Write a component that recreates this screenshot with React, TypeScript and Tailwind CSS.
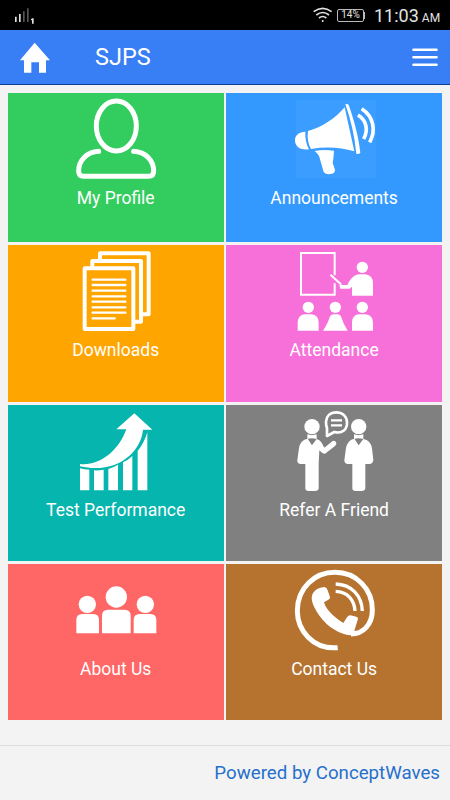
import type { ReactNode } from "react";

type TileProps = {
  label: string;
  color: string;
  viewBox: string;
  children: ReactNode;
};

function Tile({ label, color, viewBox, children }: TileProps) {
  return (
    <button type="button" className={`flex flex-col items-center overflow-hidden text-white ${color}`}>
      <svg viewBox={viewBox} className="h-[94px] w-[216px] shrink-0" fill="white" aria-hidden="true">
        {children}
      </svg>
      <span className="text-[17.5px] leading-[22px] whitespace-nowrap">{label}</span>
    </button>
  );
}

function ProfileIcon() {
  return (
    <g fill="none" stroke="white" strokeWidth="15" strokeLinecap="round" strokeLinejoin="round">
      <ellipse cx="169" cy="108" rx="60" ry="75" />
      <path d="M116 184C80 186 56 211 56 243Q56 259 71 259H266Q281 259 281 243C281 211 257 186 221 184" />
    </g>
  );
}

function MegaphoneIcon() {
  return (
    <>
      <rect x="77" y="28" width="241" height="236" fill="#3a9dff" />
      <path d="M106 125C84 126 74 138 75 153C77 171 91 181 117 178C109 164 105 144 106 125Z" />
      <path d="M114 123C157 111 195 86 224 52L253 184C213 172 168 169 123 177C114 162 111 143 114 123Z" />
      <path d="M226 43Q231 40 236 44C252 90 266 139 271 188Q266 194 259 191C254 139 243 91 226 43Z" />
      <path d="M134 183Q160 178 192 182Q191 204 188 219L195 239Q195 252 180 252Q166 254 161 246L150 208Q148 194 134 183Z" />
      <g fill="none" stroke="white" strokeWidth="11">
        <path d="M264 75C289 91 296 119 281 147" />
        <path d="M275 56C312 80 318 122 299 157" />
      </g>
    </>
  );
}

function DocumentsIcon() {
  return (
    <g fill="none" stroke="white" strokeWidth="12" strokeLinejoin="round">
      <rect x="74" y="85" width="146" height="182" />
      <path d="M97 81V63H243V245H224M120 59V40H266V223H246" />
      <path strokeWidth="7" strokeLinecap="round" d="M98 119H196M98 135H196M98 152H196M98 169H196M98 185H196M98 202H196M98 218H196M98 235H164" />
    </g>
  );
}

function ClassroomIcon() {
  return (
    <>
      <path d="M164 106V39H63V164H164V130" fill="none" stroke="white" strokeWidth="6" />
      <path d="M153 106L182 132" fill="none" stroke="white" strokeWidth="6" strokeLinecap="round" />
      <circle cx="247" cy="82" r="17" />
      <path d="M178 135H202C211 117 222 105 236 103H256Q279 106 279 130V167H216V140L209 146H181Z" />
      <circle cx="85" cy="202" r="17" />
      <circle cx="166" cy="202" r="17" />
      <circle cx="247" cy="202" r="17" />
      <path d="M53 272V247Q54 224 76 223H94Q116 225 116 248V272Z" />
      <path d="M216 272V247Q217 224 238 223H256Q279 225 279 248V272Z" />
      <path d="M129 272Q145 248 149 231Q152 223 160 223H172Q181 223 184 232Q189 250 203 272Z" />
    </>
  );
}

function GrowthIcon() {
  return (
    <>
      <path d="M60 192C119 198 175 154 199 88H169L223 40L277 89H249C243 157 169 224 60 199Z" />
      <path d="M60 205Q74 209 88 209V271H60ZM102 211Q116 212 131 209V271H102ZM145 207Q161 202 174 194V271H145ZM189 187Q204 181 217 168V271H189ZM233 153Q253 128 262 97V271H233Z" />
    </>
  );
}

function FriendsIcon() {
  return (
    <>
      <circle cx="111" cy="80" r="23" />
      <circle cx="251" cy="80" r="23" />
      <path d="M97 103Q111 108 125 103V117Q111 113 97 117ZM237 103Q251 108 265 103V117Q251 113 237 117Z" />
      <path d="M98 116L111 136L125 117Q134 119 139 127L148 143L173 123Q181 120 184 129Q185 133 180 138L150 161Q142 162 133 151L131 190V265Q130 273 120 273H101Q91 273 91 265V192H76Q66 190 67 181L72 144Q76 120 98 116Z" />
      <path d="M238 116L251 136L265 117Q287 121 291 145L295 180Q294 191 285 192H271V265Q270 273 260 273H242Q232 273 232 265V192H217Q208 190 208 181L213 144Q218 120 238 116Z" />
      <g fill="none" stroke="white" strokeLinejoin="round">
        <path strokeWidth="8" d="M156 85V108L178 96C203 102 217 87 216 67C215 48 202 37 184 37C165 37 154 49 153 65Q153 77 156 85Z" />
        <path strokeWidth="7" d="M168 61H201M168 76H201" />
      </g>
    </>
  );
}

function TeamIcon() {
  return (
    <>
      <circle cx="169" cy="111" r="32" />
      <circle cx="82" cy="133" r="26" />
      <circle cx="256" cy="133" r="26" />
      <path d="M126 220V167Q126 149 144 149H194Q212 149 212 167V220Z" />
      <path d="M49 220V180Q49 162 67 162H100Q117 162 117 180V220ZM221 220V180Q221 162 239 162H271Q289 162 289 180V220Z" />
    </>
  );
}

function PhoneIcon() {
  return (
    <>
      <path d="M188 263C113 269 67 210 67 152C67 84 119 37 180 37C245 37 292 88 292 149C292 195 263 222 228 222" fill="none" stroke="white" strokeWidth="15" />
      <path d="M116 97Q127 82 149 81Q156 83 158 91L165 111Q166 117 160 119L147 127Q153 147 174 166Q192 182 205 189L216 172Q220 166 226 166L244 170Q251 173 248 180L238 212L250 213Q239 226 224 226C178 220 138 183 118 142C108 122 108 107 116 97Z" />
      <g fill="none" stroke="white" strokeWidth="10">
        <path d="M182 72C230 74 260 106 262 153" />
        <path d="M182 94C217 95 238 119 240 153" />
      </g>
    </>
  );
}

function StatusBar() {
  return (
    <div className="flex h-[30px] items-center bg-black text-[#e2e2e2]">
      <svg viewBox="0 0 225 90" className="h-[30px] w-[75px]" aria-hidden="true">
        <path d="M45 50H50V66H45ZM57 42H62V66H57Z" fill="#e0e0e0" />
        <path d="M69 34H74V66H69ZM81 25H86V66H81Z" fill="#555555" />
        <path d="M93 58L97 55H101V71H96V61H93Z" fill="#e0e0e0" />
      </svg>
      <svg viewBox="252 0 75 90" className="ml-[234px] h-[30px] w-[25px]" fill="none" stroke="#e2e2e2" strokeWidth="5" aria-hidden="true">
        <path d="M266 35Q293 15 320 35M274 45Q293 30 312 45M282 54Q293 45 304 54" />
        <circle cx="293" cy="63" r="3" fill="#e2e2e2" stroke="none" />
      </svg>
      <div className="ml-[3px] flex h-[13px] w-[27px] items-center justify-center rounded-[2px] border border-[#bbbbbb] text-[10px] leading-none">14%</div>
      <div className="h-[7px] w-px bg-[#bbbbbb]" />
      <div className="ml-[9px] flex items-baseline whitespace-nowrap">
        <span className="text-[18px] leading-[31px]">11:03</span>
        <span className="ml-[3px] text-[12px]">AM</span>
      </div>
    </div>
  );
}

export default function App() {
  return (
    <div className="flex h-[800px] w-[450px] flex-col overflow-hidden bg-[#f3f3f3] font-[Roboto,sans-serif]">
      <StatusBar />
      <header className="flex h-[55px] items-center border-b border-[#123a91] bg-[#387ef5]">
        <svg viewBox="60 90 90 165" className="ml-[20px] h-[55px] w-[30px]" fill="white" aria-hidden="true">
          <path d="M60 181L104 128L150 181H138V218H117V187H94V218H72V181Z" />
        </svg>
        <h1 className="ml-[45px] text-[23.5px] leading-[54px] text-white">SJPS</h1>
        <button type="button" aria-label="Menu" className="mr-[12px] ml-auto">
          <svg viewBox="0 0 26 18" className="block h-[18px] w-[26px]" stroke="white" strokeWidth="2.6" strokeLinecap="round" aria-hidden="true">
            <path d="M1.5 1.7H24.5M1.5 9.2H24.5M1.5 16.7H24.5" />
          </svg>
        </button>
      </header>
      <main className="mr-[7.7px] ml-[7.5px] mt-[7.5px] grid h-[627.5px] shrink-0 grid-cols-2 grid-rows-[149.5px_157.5px_156px_156px] gap-x-[2px] gap-y-[2.8px]">
        <Tile label="My Profile" color="bg-[#33cd5f]" viewBox="-156 9 648 282"><ProfileIcon /></Tile>
        <Tile label="Announcements" color="bg-[#3399ff]" viewBox="-132 9 648 282"><MegaphoneIcon /></Tile>
        <Tile label="Downloads" color="bg-[#ffa500]" viewBox="-156 15 648 282"><DocumentsIcon /></Tile>
        <Tile label="Attendance" color="bg-[#f76fd8]" viewBox="-162 15 648 282"><ClassroomIcon /></Tile>
        <Tile label="Test Performance" color="bg-[#06b5ad]" viewBox="-156 15 648 282"><GrowthIcon /></Tile>
        <Tile label="Refer A Friend" color="bg-[#808080]" viewBox="-147 15 648 282"><FriendsIcon /></Tile>
        <Tile label="About Us" color="bg-[#ff6666]" viewBox="-156 12 648 282"><TeamIcon /></Tile>
        <Tile label="Contact Us" color="bg-[#b5732f]" viewBox="-147 12 648 282"><PhoneIcon /></Tile>
      </main>
      <footer className="mt-auto flex h-[55px] items-center justify-end border-t border-[#dcdcdc] pr-[10px] text-[18.7px] whitespace-nowrap text-[#2670cc]">
        Powered by ConceptWaves
      </footer>
    </div>
  );
}
